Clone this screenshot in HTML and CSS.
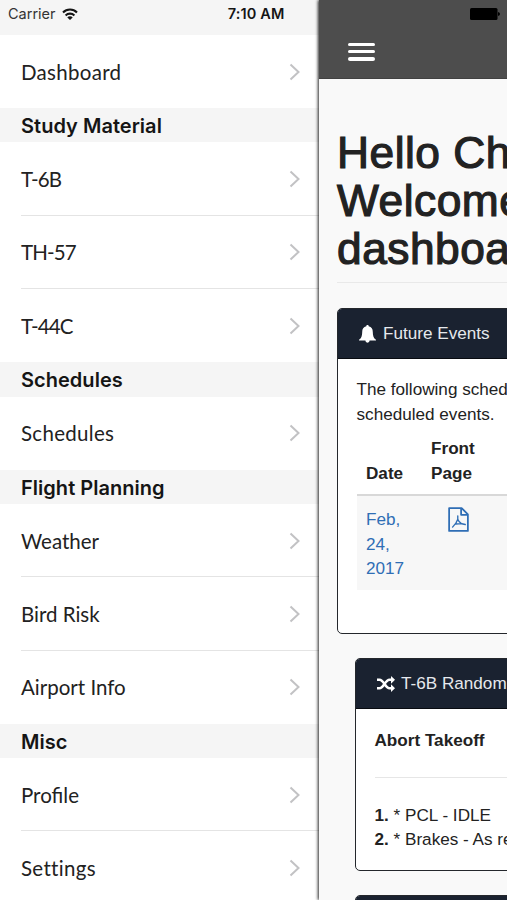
FILE: index.html
```html
<!DOCTYPE html>
<html lang="en">
<head>
<meta charset="utf-8">
<title>Dashboard</title>
<link rel="stylesheet" href="styles.css">
</head>
<body>
<svg class="defs" aria-hidden="true"><symbol id="chev" viewBox="0 0 12 18"><path d="M1.500 1.500l8 7.500-8 7.500" fill="none" stroke="#c2c2c4" stroke-width="2"/></symbol></svg>
<div class="app">
  <nav class="menu">
    <div class="status">
      <span class="carrier">Carrier</span>
      <svg class="wifi" viewBox="0 0 16 12"><g fill="none" stroke="#151515" stroke-width="2.100"><path d="M1 4.400a10 10 0 0 1 14 0"/><path d="M3.600 7.400a6.300 6.300 0 0 1 8.800 0"/></g><path d="M5.300 9.400a3.600 3.600 0 0 1 5.400 0L8 12z" fill="#151515"/></svg>
      <span class="time">7:10 AM</span>
    </div>
    <a class="row"><span>Dashboard</span><svg><use href="#chev"/></svg></a>
    <h2>Study Material</h2>
    <a class="row line model"><span>T-6B</span><svg><use href="#chev"/></svg></a>
    <a class="row line model"><span>TH-57</span><svg><use href="#chev"/></svg></a>
    <a class="row model"><span>T-44C</span><svg><use href="#chev"/></svg></a>
    <h2>Schedules</h2>
    <a class="row"><span>Schedules</span><svg><use href="#chev"/></svg></a>
    <h2>Flight Planning</h2>
    <a class="row line snug"><span>Weather</span><svg><use href="#chev"/></svg></a>
    <a class="row line snug"><span>Bird Risk</span><svg><use href="#chev"/></svg></a>
    <a class="row snug"><span>Airport Info</span><svg><use href="#chev"/></svg></a>
    <h2>Misc</h2>
    <a class="row line snug"><span>Profile</span><svg><use href="#chev"/></svg></a>
    <a class="row"><span>Settings</span><svg><use href="#chev"/></svg></a>
  </nav>
  <main class="page">
    <header class="bar">
      <svg class="battery" viewBox="0 0 30 12"><rect width="27.500" height="12" rx="1.500"/><path d="M28 4q2 .3 2 2t-2 2z"/></svg>
      <div class="burger"><i></i><i></i><i></i></div>
    </header>
    <div class="content">
      <h1>Hello Ch<br>Welcome<br>dashboa</h1>
      <section class="panel">
        <div class="head">
          <svg class="bell" viewBox="0 0 16 17"><path fill="#fff" d="M8 0c.8 0 1.100.5 1.100 1.200C11.800 1.800 13 3.800 13 6.500c0 3.600.8 5.600 3 7.500v.7H10a2 2 0 0 1-4 0H0V14c2.200-1.900 3-3.900 3-7.500 0-2.700 1.200-4.700 3.900-5.300C6.900.5 7.200 0 8 0z"/></svg>
          <span>Future Events</span>
        </div>
        <div class="body">
          <p>The following sched<br>scheduled events.</p>
          <div class="table">
            <div class="tr th"><b>Date</b><b>Front<br>Page</b></div>
            <div class="tr td"><span>Feb,<br>24,<br>2017</span>
              <svg class="pdf" viewBox="0 0 20 24" fill="none" stroke="#2f6eb5" stroke-width="1.700" stroke-linejoin="round"><path d="M1 1h12l6 6v16H1zM12.500 1v6.500H19"/><path stroke-width="1.300" stroke-linecap="round" d="M9.300 8.500v3.300L7.500 15.500 4.300 19.300M9.300 11.800c.7 2 2 3.400 3.800 4.300l3.400.7M7.500 16.300l5.600-.4"/></svg>
            </div>
          </div>
        </div>
      </section>
      <section class="panel inner">
        <div class="head">
          <svg class="shuffle" viewBox="0 0 18 16"><g fill="none" stroke="#fff" stroke-width="2.500"><path d="M0 3.800h2.500c4.500 0 5.500 8.400 10 8.400H15"/><path d="M0 12.200h2.500c4.500 0 5.500-8.400 10-8.400H15"/></g><path fill="#fff" d="M14 0l4 3.800-4 3.900zM14 8.300l4 3.900-4 3.800z"/></svg>
          <span>T-6B Random</span>
        </div>
        <div class="body">
          <b class="title">Abort Takeoff</b>
          <hr>
          <p><b>1.</b> * PCL - IDLE<br><b>2.</b> * Brakes - As re</p>
        </div>
      </section>
      <section class="panel inner"><div class="head"></div></section>
    </div>
  </main>
</div>
</body>
</html>
```
FILE: styles.css
```css
* { box-sizing: border-box; }
body { margin: 0; font-family: "Liberation Sans", Arial, sans-serif; color: #222; }
.defs { position: absolute; width: 0; height: 0; }
.app { display: grid; grid-template-columns: 318.500px 1fr; width: 507px; height: 900px; overflow: hidden; }

.menu { background: #fff; height: 900px; overflow: hidden; white-space: nowrap; }
.status { display: flex; height: 35px; padding: 0 34px 8px 8px; align-items: center; background: #f5f5f5; font: 14.500px Inter, sans-serif; color: #151515; }
.carrier { color: #333; }
.wifi { width: 16px; height: 12px; margin-left: 6px; }
.time { margin-left: auto; font-weight: 600; letter-spacing: .15px; }
.menu h2 { margin: 0; height: 34.200px; padding-left: 21px; background: #f5f5f5; font: 600 20px/37px Inter, sans-serif; letter-spacing: .03px; color: #151515; }
.row { display: flex; height: 73.300px; padding: 0 18px 0 21px; align-items: center; justify-content: space-between; font: 20.500px Lato, sans-serif; letter-spacing: .3px; color: #222; }
.row svg { width: 12px; height: 18px; }
.row.line { background: linear-gradient(#e4e4e4, #e4e4e4) 21px 100% / 100% 1px no-repeat; }
.row.model { letter-spacing: -.85px; }
.row.snug { letter-spacing: 0; }

.page { position: relative; min-width: 0; height: 900px; background: #f9f9f9; box-shadow: -1px 0 3px rgba(0,0,0,.85); }
.bar { height: 79px; background: #4d4d4d; border-bottom: 1px solid #414141; padding: 8px 0 0 29.500px; }
.battery { display: block; width: 30px; height: 12px; margin-left: 122px; }
.burger { display: flex; flex-direction: column; gap: 4px; margin-top: 22.500px; width: 26.500px; }
.burger i { height: 3.400px; border-radius: 2px; background: #fff; }
.content { height: 821px; padding: 50px 0 0 18.500px; overflow: hidden; white-space: nowrap; }
h1 { margin: 0 0 25px; height: 154px; border-bottom: 1px solid #e9e9e9; font-size: 44.300px; line-height: 48px; font-weight: 400; letter-spacing: .5px; -webkit-text-stroke: 1.200px #222; }
.panel { width: 230px; height: 326px; margin-bottom: 24px; border: 1.500px solid #24272c; border-radius: 5px; background: #fff; font-size: 17.140px; line-height: 24.500px; overflow: hidden; }
.head { display: flex; height: 50px; padding-left: 21px; align-items: center; background: #1a2230; border-bottom: 1px solid #080b10; color: #e6e9ed; }
.bell { width: 17px; height: 18px; margin-right: 7px; }
.body { padding: 18px 0 0 18.500px; }
p { margin: 0; }
.table { margin-top: 10px; }
.tr { display: grid; grid-template-columns: 65px 1fr; padding-left: 9.500px; }
.th { height: 60px; align-items: end; padding-bottom: 11px; border-bottom: 2px solid #d8d8d8; }
.td { height: 94px; padding-top: 11px; background: #f7f7f7; color: #2f6eb5; }
.pdf { width: 21px; height: 25px; margin-left: 17px; }
.inner { margin-left: 18px; height: 213px; }
.inner .body { padding-top: 19px; }
.shuffle { width: 18px; height: 16px; margin-right: 6px; }
.title { display: block; }
hr { margin: 24px 0 25px; border: 0; border-top: 1px solid #e6e6e6; }
```
